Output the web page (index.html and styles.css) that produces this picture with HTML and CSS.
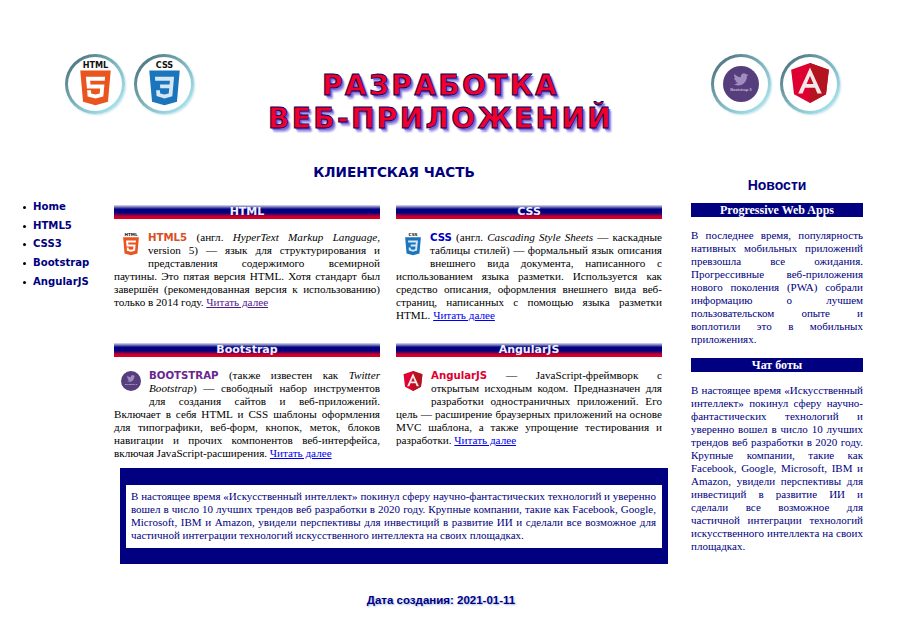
FILE: index.html
```html
<!DOCTYPE html>
<html lang="ru">
<head>
<meta charset="utf-8">
<title>Разработка веб-приложений</title>
<link rel="stylesheet" href="styles.css">
</head>
<body>
<svg class="defs" aria-hidden="true">
  <symbol id="i-html" viewBox="0 0 24 31">
    <text x="12" y="5" text-anchor="middle" class="logo-word">HTML</text>
    <g transform="translate(0 6.5)">
      <path fill="#fff" d="M4 3h16v17H4z"/>
      <path fill="#e9541f" d="M1.5 0h21l-1.91 21.563L11.977 24l-8.565-2.438L1.5 0zm7.031 9.75l-.232-2.718 10.059.003.23-2.622L5.412 4.41l.698 8.01h9.126l-.326 3.426-2.91.804-2.955-.81-.188-2.11H6.248l.33 4.171L12 19.351l5.379-1.443.744-8.157H8.531z"/>
    </g>
  </symbol>
  <symbol id="i-css" viewBox="0 0 24 31">
    <text x="12" y="5" text-anchor="middle" class="logo-word">CSS</text>
    <g transform="translate(0 6.5)">
      <path fill="#d6e8f6" d="M4 3h16v17H4z"/>
      <path fill="#1b75bc" d="M1.5 0h21l-1.91 21.563L11.977 24l-8.565-2.438L1.5 0zm17.09 4.413L5.41 4.41l.213 2.622 10.125.002-.255 2.716h-6.64l.24 2.573h6.182l-.366 3.523-2.91.804-2.956-.81-.188-2.11h-2.61l.29 3.855L12 19.288l5.373-1.53L18.59 4.414z"/>
    </g>
  </symbol>
  <symbol id="i-boot" viewBox="0 0 36 36">
    <circle cx="18" cy="18" r="18" fill="#563d7c"/>
    <path fill="#a08cc0" transform="translate(10.5 6) scale(.62)" d="M23.953 4.57a10 10 0 01-2.825.775 4.958 4.958 0 002.163-2.723c-.951.555-2.005.959-3.127 1.184a4.92 4.92 0 00-8.384 4.482C7.69 8.095 4.067 6.13 1.64 3.162a4.822 4.822 0 00-.666 2.475c0 1.71.87 3.213 2.188 4.096a4.904 4.904 0 01-2.228-.616v.06a4.923 4.923 0 003.946 4.827 4.996 4.996 0 01-2.212.085 4.936 4.936 0 004.604 3.417 9.867 9.867 0 01-6.102 2.105c-.39 0-.779-.023-1.17-.067a13.995 13.995 0 007.557 2.209c9.053 0 13.998-7.496 13.998-13.985 0-.21 0-.42-.015-.63A9.935 9.935 0 0024 4.59z"/>
    <text x="18" y="25" text-anchor="middle" class="boot-word">Bootstrap 3</text>
  </symbol>
  <symbol id="i-ang" viewBox="0 0 24 24">
    <path fill="#dd0031" d="M12 0 .68 3.98l1.73 14.77L12 24l9.6-5.24 1.72-14.78z"/>
    <path fill="#b3141f" d="M12 0v24l9.6-5.24 1.72-14.78z"/>
    <path fill="#f4e8e8" fill-rule="evenodd" d="M12 2.65 4.93 18.31h2.64l1.43-3.5h6.01l1.42 3.5h2.64zM9.93 12.65h4.14L12 7.74z"/>
  </symbol>
</svg>

<header class="top">
  <div class="badges">
    <span class="badge"><svg class="badge-html"><use href="#i-html"/></svg></span>
    <span class="badge"><svg class="badge-html"><use href="#i-css"/></svg></span>
  </div>
  <h1 class="title">РАЗРАБОТКА<br>ВЕБ-ПРИЛОЖЕНИЙ</h1>
  <div class="badges">
    <span class="badge"><svg class="badge-boot"><use href="#i-boot"/></svg></span>
    <span class="badge"><svg class="badge-ang"><use href="#i-ang"/></svg></span>
  </div>
</header>

<div class="layout">
  <nav class="nav">
    <ul>
      <li><a href="#">Home</a></li>
      <li><a href="#">HTML5</a></li>
      <li><a href="#">CSS3</a></li>
      <li><a href="#">Bootstrap</a></li>
      <li><a href="#">AngularJS</a></li>
    </ul>
  </nav>

  <main class="center">
    <h2 class="center-title">КЛИЕНТСКАЯ ЧАСТЬ</h2>
    <div class="cards">
      <article class="card">
        <h3 class="card-head">HTML</h3>
        <p class="card-text"><svg class="ico ico-shield"><use href="#i-html"/></svg><b class="lead lead-html">HTML5</b> (англ. <i>HyperText Markup Language</i>, version 5) — язык для структурирования и представления содержимого всемирной паутины. Это пятая версия HTML. Хотя стандарт был завершён (рекомендованная версия к использованию) только в 2014 году. <a class="visited" href="#">Читать далее</a></p>
      </article>
      <article class="card">
        <h3 class="card-head">CSS</h3>
        <p class="card-text"><svg class="ico ico-shield"><use href="#i-css"/></svg><b class="lead lead-css">CSS</b> (англ. <i>Cascading Style Sheets</i> — каскадные таблицы стилей) — формальный язык описания внешнего вида документа, написанного с использованием языка разметки. Используется как средство описания, оформления внешнего вида веб-страниц, написанных с помощью языка разметки HTML. <a class="fresh" href="#">Читать далее</a></p>
      </article>
      <article class="card">
        <h3 class="card-head">Bootstrap</h3>
        <p class="card-text"><svg class="ico ico-round"><use href="#i-boot"/></svg><b class="lead lead-boot">BOOTSTRAP</b> (также известен как <i>Twitter Bootstrap</i>) — свободный набор инструментов для создания сайтов и веб-приложений. Включает в себя HTML и CSS шаблоны оформления для типографики, веб-форм, кнопок, меток, блоков навигации и прочих компонентов веб-интерфейса, включая JavaScript-расширения. <a class="fresh" href="#">Читать далее</a></p>
      </article>
      <article class="card">
        <h3 class="card-head">AngularJS</h3>
        <p class="card-text"><svg class="ico ico-round"><use href="#i-ang"/></svg><b class="lead lead-ang">AngularJS</b> — JavaScript-фреймворк с открытым исходным кодом. Предназначен для разработки одностраничных приложений. Его цель — расширение браузерных приложений на основе MVC шаблона, а также упрощение тестирования и разработки. <a class="fresh" href="#">Читать далее</a></p>
      </article>
    </div>
    <section class="banner">
      <p class="banner-text">В настоящее время «Искусственный интеллект» покинул сферу научно-фантастических технологий и уверенно вошел в число 10 лучших трендов веб разработки в 2020 году. Крупные компании, такие как Facebook, Google, Microsoft, IBM и Amazon, увидели перспективы для инвестиций в развитие ИИ и сделали все возможное для частичной интеграции технологий искусственного интеллекта на своих площадках.</p>
    </section>
  </main>

  <aside class="news">
    <h2 class="news-title">Новости</h2>
    <h3 class="news-head">Progressive Web Apps</h3>
    <p class="news-text">В последнее время, популярность нативных мобильных приложений превзошла все ожидания. Прогрессивные веб-приложения нового поколения (PWA) собрали информацию о лучшем пользовательском опыте и воплотили это в мобильных приложениях.</p>
    <h3 class="news-head">Чат боты</h3>
    <p class="news-text">В настоящее время «Искусственный интеллект» покинул сферу научно-фантастических технологий и уверенно вошел в число 10 лучших трендов веб разработки в 2020 году. Крупные компании, такие как Facebook, Google, Microsoft, IBM и Amazon, увидели перспективы для инвестиций в развитие ИИ и сделали все возможное для частичной интеграции технологий искусственного интеллекта на своих площадках.</p>
  </aside>
</div>

<footer class="foot">Дата создания: 2021-01-11</footer>
</body>
</html>
```

FILE: styles.css
```css
* { box-sizing: border-box; }

html, body { margin: 0; padding: 0; background: #fff; }

body {
  width: 899px;
  height: 635px;
  overflow: hidden;
  font-family: "Liberation Serif", serif;
  font-size: 11.15px;
  line-height: 13px;
  color: #000;
}

.defs { display: none; }

.logo-word {
  font-family: "DejaVu Sans", sans-serif;
  font-size: 5.6px;
  font-weight: 700;
  fill: #111;
}

.boot-word {
  font-family: "Liberation Sans", sans-serif;
  font-size: 4.2px;
  fill: #e4dcf0;
}

.top {
  display: flex;
  align-items: flex-start;
  justify-content: space-between;
  padding: 54px 59px 0 65px;
  height: 165px;
}

.badges { display: flex; gap: 9px; }

.badge {
  display: flex;
  align-items: center;
  justify-content: center;
  width: 60px;
  height: 60px;
  border: 3px solid transparent;
  border-radius: 50%;
  background:
    linear-gradient(#fff, #fff) padding-box,
    linear-gradient(135deg, #4c7480 10%, #7fb4bd 50%, #a9e6f0 90%) border-box;
  box-shadow: 1px 1px 2px rgba(120, 190, 205, .45);
}

.badge-html { width: 35px; height: 45px; margin-top: -2px; }
.badge-boot { width: 36px; height: 36px; }
.badge-ang { width: 40px; height: 40px; margin-top: -3px; }

.title {
  margin: 15px 24px 0 0;
  font-family: "DejaVu Sans", sans-serif;
  font-size: 28px;
  line-height: 33px;
  font-weight: 700;
  letter-spacing: 2.4px;
  text-align: center;
  color: #f0002a;
  -webkit-text-stroke: .8px #000060;
  text-shadow: 2px 2px 1px #7468d4, 3px 4px 2px #a89ce4;
}

.layout {
  display: grid;
  grid-template-columns: 114px 548px 172px;
  column-gap: 0;
  align-items: start;
}

.nav ul {
  margin: 33px 0 0;
  padding: 0 0 0 23px;
  list-style: none;
  font-family: "DejaVu Sans", sans-serif;
  font-size: 10.1px;
  line-height: 18.7px;
  font-weight: 700;
}

.nav li { display: flex; align-items: center; gap: 7px; }

.nav li::before {
  content: "";
  width: 3px;
  height: 3px;
  border-radius: 50%;
  background: #000;
}

.nav a { color: #000080; text-decoration: none; }

.center-title {
  margin: 0 0 26px;
  font-family: "DejaVu Sans", sans-serif;
  font-size: 13.6px;
  line-height: 14px;
  font-weight: 700;
  text-align: center;
  color: #000080;
  padding-left: 12px;
}

.cards {
  display: grid;
  grid-template-columns: 266px 266px;
  grid-template-rows: 138px 125px;
  column-gap: 16px;
}

.card-head {
  margin: 0 0 12px;
  height: 14px;
  font-family: "DejaVu Sans", sans-serif;
  font-size: 11px;
  line-height: 14px;
  font-weight: 700;
  text-align: center;
  color: #f0f0ff;
  background: linear-gradient(#e0e0f2 0, #000080 30%, #000080 55%, #c00030 80%, #e00020 100%);
}

.card-text { margin: 0; text-align: justify; }

.ico { float: left; }
.ico-shield { width: 18px; height: 24px; margin: 1px 8px 10px 8px; }
.ico-round { width: 20px; height: 20px; margin: 2px 8px 12px 7px; }

.lead { font-family: "DejaVu Sans", sans-serif; font-size: 10.2px; }
.lead-html { color: #d9501e; }
.lead-css { color: #0000c0; }
.lead-boot { color: #6a2590; }
.lead-ang { color: #dd0031; }

.visited { color: #551a8b; }
.fresh { color: #0000ee; }

.banner {
  width: 548px;
  height: 96px;
  margin-left: 6px;
  padding: 17px 6px 0;
  background: #000080;
}

.banner-text {
  margin: 0;
  padding: 5px 6px 6px 5px;
  background: #fff;
  color: #000080;
  font-size: 11px;
  text-align: justify;
}

.news { margin-left: 29px; width: 172px; }

.news-title {
  margin: 13px 0 11px;
  font-family: "Liberation Sans", sans-serif;
  font-size: 14px;
  line-height: 14px;
  font-weight: 700;
  text-align: center;
  color: #000080;
}

.news-head {
  margin: 0;
  height: 14px;
  font-size: 12px;
  line-height: 14px;
  font-weight: 700;
  text-align: center;
  color: #fff;
  background: #000080;
}

.news-text {
  margin: 12px 0;
  color: #000080;
  font-size: 11px;
  text-align: justify;
}

.foot {
  margin-top: 28px;
  padding-right: 17px;
  font-family: "Liberation Sans", sans-serif;
  font-size: 11.5px;
  font-weight: 700;
  line-height: 14px;
  text-align: center;
  color: #000080;
  text-shadow: 1px 1px 2px #9fb8ea;
}
```
